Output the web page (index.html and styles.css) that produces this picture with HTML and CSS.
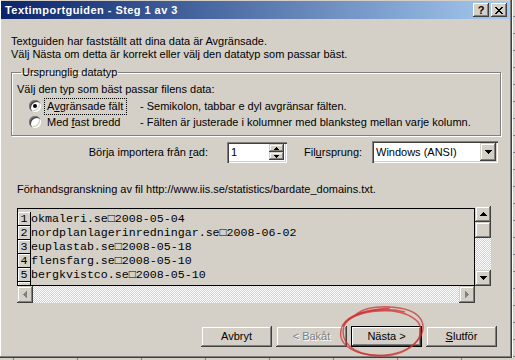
FILE: index.html
```html
<!DOCTYPE html>
<html lang="sv">
  <head>
    <meta charset="UTF-8" />
    <title>Textimportguiden - Steg 1 av 3</title>
    <link rel="stylesheet" href="styles.css">
  </head>
  <body>
    <div class="screen">
      <div class="dialog">
        <div class="titlebar">
          <span class="title">Textimportguiden - Steg 1 av 3</span>
          <span class="caption-btns">
            <span class="cap-btn">?</span>
            <span class="cap-btn">
              <svg width="8" height="7" viewBox="0 0 8 7"><path d="M0 0h2v1h-2z M6 0h2v1h-2z M1 1h2v1h-2z M5 1h2v1h-2z M2 2h4v1h-4z M3 3h2v1h-2z M2 4h4v1h-4z M1 5h2v1h-2z M5 5h2v1h-2z M0 6h2v1h-2z M6 6h2v1h-2z" /></svg>
            </span>
          </span>
        </div>

        <div class="content">
          <p class="intro">
            Textguiden har fastställt att dina data är Avgränsade.<br>
            Välj Nästa om detta är korrekt eller välj den datatyp som passar bäst.
          </p>

          <fieldset class="group">
            <legend>Ursprunglig datatyp</legend>
            <p class="group-hint">Välj den typ som bäst passar filens data:</p>
            <div class="option">
              <span class="radio checked"></span>
              <span class="option-label focused">A<u>v</u>gränsade fält</span>
              <span class="option-desc">- Semikolon, tabbar e dyl avgränsar fälten.</span>
            </div>
            <div class="option">
              <span class="radio"></span>
              <span class="option-label">Med <u>f</u>ast bredd</span>
              <span class="option-desc">- Fälten är justerade i kolumner med blanksteg mellan varje kolumn.</span>
            </div>
          </fieldset>

          <div class="import-row">
            <span class="start-label">Börja importera från <u>r</u>ad:</span>
            <span class="field spin">
              <span class="field-text">1</span>
              <span class="spin-btns">
                <span class="btn3d spin-btn"><svg width="5" height="3" viewBox="0 0 5 3"><path d="M2 0h1v1h-1z M1 1h3v1h-3z M0 2h5v1h-5z" /></svg></span>
                <span class="btn3d spin-btn"><svg width="5" height="3" viewBox="0 0 5 3"><path d="M0 0h5v1h-5z M1 1h3v1h-3z M2 2h1v1h-1z" /></svg></span>
              </span>
            </span>
            <span class="origin-label">Fil<u>u</u>rsprung:</span>
            <span class="field combo">
              <span class="field-text">Windows (ANSI)</span>
              <span class="btn3d combo-btn"><svg width="7" height="4" viewBox="0 0 7 4"><path d="M0 0h7v1h-7z M1 1h5v1h-5z M2 2h3v1h-3z M3 3h1v1h-1z" /></svg></span>
            </span>
          </div>

          <p class="preview-label">Förhandsgranskning av fil http://www.iis.se/statistics/bardate_domains.txt.</p>

          <div class="preview">
            <div class="preview-box">
              <div class="line"><span class="num">1</span><span class="txt">okmaleri.se□2008-05-04</span></div>
              <div class="line"><span class="num">2</span><span class="txt">nordplanlagerinredningar.se□2008-06-02</span></div>
              <div class="line"><span class="num">3</span><span class="txt">euplastab.se□2008-05-18</span></div>
              <div class="line"><span class="num">4</span><span class="txt">flensfarg.se□2008-05-10</span></div>
              <div class="line"><span class="num">5</span><span class="txt">bergkvistco.se□2008-05-10</span></div>
              <div class="line"><span class="num"></span><span class="txt"></span></div>
            </div>
            <div class="vscroll">
              <span class="btn3d sb-btn"><svg width="7" height="4" viewBox="0 0 7 4"><path d="M3 0h1v1h-1z M2 1h3v1h-3z M1 2h5v1h-5z M0 3h7v1h-7z" /></svg></span>
              <span class="btn3d sb-btn"></span>
              <span class="track"></span>
              <span class="btn3d sb-btn"><svg width="7" height="4" viewBox="0 0 7 4"><path d="M0 0h7v1h-7z M1 1h5v1h-5z M2 2h3v1h-3z M3 3h1v1h-1z" /></svg></span>
            </div>
            <div class="hscroll">
              <span class="btn3d sb-btn disabled"><svg width="4" height="7" viewBox="0 0 4 7"><path d="M3 0h1v7h-1z M2 1h1v5h-1z M1 2h1v3h-1z M0 3h1v1h-1z" /></svg></span>
              <span class="track"></span>
              <span class="btn3d sb-btn disabled"><svg width="4" height="7" viewBox="0 0 4 7"><path d="M0 0h1v7h-1z M1 1h1v5h-1z M2 2h1v3h-1z M3 3h1v1h-1z" /></svg></span>
            </div>
          </div>

          <div class="buttons">
            <span class="btn3d button">Avbryt</span>
            <span class="btn3d button disabled">&lt; Bakåt</span>
            <span class="btn3d button default">Nästa &gt;</span>
            <span class="btn3d button"><u>S</u>lutför</span>
          </div>
        </div>
      </div>
      <div class="rowheads"></div>
      <div class="colheads"></div>
      <div class="corner"></div>

      <!-- hand-drawn marker ring round the Next button -->
      <svg class="scribble" width="515" height="360" viewBox="0 0 515 360">
        <path d="M356 314 C372 303 410 305 420 318 C430 332 415 352 385 355 C355 357 338 345 341 330 C343 318 360 310 390 308" />
        <path d="M349 320 C365 306 405 308 418 322 C428 336 410 356 380 356 C350 355 340 340 344 326 C348 316 368 309 395 311" />
        <path d="M343 326 C350 312 380 306 405 312" />
      </svg>
    </div>
  </body>
</html>
```

FILE: styles.css
```css
* {
  box-sizing: border-box;
}
html,
body {
  margin: 0;
}
body {
  width: 515px;
  height: 360px;
  overflow: hidden;
  background: #d4d0c8;
  font-family: "Liberation Sans", Arial, sans-serif;
  font-size: 11px;
  line-height: 13px;
  color: #000;
}
p {
  margin: 0;
}
u {
  text-decoration-thickness: 1px;
  text-underline-offset: 1px;
}
.screen {
  position: relative;
  display: grid;
  grid-template-columns: 512px 3px;
  grid-template-rows: 358px 2px;
}

/* window frame */
.dialog {
  display: flex;
  flex-direction: column;
  padding: 1px 2px 2px 1px;
  background: #d4d0c8;
  box-shadow: inset -1px -1px #404040, inset -2px -2px #808080, inset 1px 0 #fff;
}
.titlebar {
  height: 18px;
  display: flex;
  align-items: center;
  justify-content: space-between;
  padding: 0 3px 0 4px;
  background: linear-gradient(to right, #0a246a, #a6caf0);
}
.title {
  color: #fff;
  font-weight: bold;
  letter-spacing: 0.45px;
}
.caption-btns {
  display: flex;
  gap: 2px;
}
.cap-btn {
  width: 16px;
  height: 14px;
  display: flex;
  align-items: center;
  justify-content: center;
  background: #d4d0c8;
  font-weight: bold;
  font-size: 11px;
  box-shadow: inset -1px -1px #404040, inset 1px 1px #fff, inset -2px -2px #808080;
}

/* shared 3d button look */
.btn3d {
  background: #d4d0c8;
  box-shadow: inset -1px -1px #404040, inset 1px 1px #d4d0c8, inset -2px -2px #808080, inset 2px 2px #fff;
  display: flex;
  align-items: center;
  justify-content: center;
}
svg path {
  fill: #000;
}
.disabled svg path {
  fill: #808080;
}

.content {
  flex: 1;
  padding: 16px 9px 0 10px;
  display: flex;
  flex-direction: column;
}

/* group box */
.group {
  margin: 5px 0 0;
  padding: 5px 5px 5px 5px;
  border: 1px solid #808080;
  box-shadow: 1px 1px #fff, inset 1px 1px #fff;
  min-width: 0;
}
.group legend {
  padding: 0 1px;
  margin-left: 4px;
}
.group-hint {
  margin-top: -1px;
  margin-bottom: 2px;
}
.option {
  height: 16px;
  display: flex;
  align-items: center;
  padding-left: 12px;
}
.radio {
  position: relative;
  width: 12px;
  height: 12px;
  border-radius: 50%;
  background: #fff;
  box-shadow: inset 1px 1px #808080, inset 2px 2px #404040, inset -1px -1px #fff, inset -2px -2px #d4d0c8;
}
.radio.checked::after {
  content: "";
  position: absolute;
  left: 4px;
  top: 4px;
  width: 4px;
  height: 4px;
  border-radius: 50%;
  background: #000;
}
.option-label {
  width: 85px;
  margin-left: 3px;
  padding: 1px 1px 1px 2px;
  border: 1px dotted transparent;
}
.option-label.focused {
  border-color: #000;
  width: 83px;
  margin-right: 2px;
}
.option-desc {
  margin-left: 11px;
}

/* import start row */
.import-row {
  display: flex;
  align-items: center;
  height: 22px;
  margin-top: 5px;
  padding-left: 6px;
}
.start-label {
  width: 191px;
  text-align: right;
}
.field {
  position: relative;
  height: 21px;
  display: flex;
  align-items: center;
  background: #fff;
  box-shadow: inset 1px 1px #808080, inset 2px 2px #404040, inset -1px -1px #fff, inset -2px -2px #d4d0c8;
}
.field-text {
  flex: 1;
  padding-left: 4px;
}
.spin {
  width: 60px;
  margin-left: 19px;
}
.spin-btns {
  display: flex;
  flex-direction: column;
  margin-right: 3px;
}
.spin-btn {
  width: 15px;
  height: 8px;
}
.origin-label {
  margin-left: 17px;
  width: 57px;
}
.combo {
  width: 126px;
  height: 22px;
  margin-left: 11px;
}
.combo-btn {
  width: 16px;
  height: 18px;
  margin-right: 2px;
}

.preview-label {
  margin-top: 20px;
  padding-left: 6px;
}

/* preview grid with scrollbars */
.preview {
  display: grid;
  grid-template-columns: 458px 16px;
  grid-template-rows: 80px 17px;
  margin: 10px 0 0 6px;
}
.preview-box {
  margin-top: 2px;
  border: 1px solid #000;
  overflow: hidden;
  padding-top: 3px;
  font-family: "Liberation Mono", "DejaVu Sans Mono", monospace;
  font-size: 11.65px;
  line-height: 14px;
}
.line {
  display: flex;
  height: 14px;
}
.num {
  width: 13px;
  flex: none;
  text-align: center;
  border-right: 1px solid #000;
  border-bottom: 1px solid #000;
  box-shadow: inset 1px 1px #fff;
}
.txt {
  white-space: pre;
}
.track {
  flex: 1;
  background: repeating-conic-gradient(#fff 0 25%, #d4d0c8 0 50%) 0 0 / 2px 2px;
}
.vscroll {
  display: flex;
  flex-direction: column;
}
.vscroll .sb-btn {
  height: 16px;
}
.hscroll {
  display: flex;
}
.hscroll .sb-btn {
  width: 16px;
}

/* wizard buttons */
.buttons {
  display: flex;
  justify-content: flex-end;
  gap: 4px;
  margin: 23px 4px 0 0;
}
.button {
  width: 71px;
  height: 21px;
}
.button.disabled {
  color: #808080;
  text-shadow: 1px 1px #fff;
}
.button.default {
  box-shadow: inset 0 0 0 1px #000, inset -2px -2px #404040, inset 2px 2px #fff, inset -3px -3px #808080;
}

/* excel window peeking out behind the dialog */
.rowheads {
  background: #d4d0c8 repeating-linear-gradient(to bottom, transparent 0 16px, #808080 16px 17px);
  border-left: 1px solid #fff;
}
.colheads {
  background: repeating-linear-gradient(to right, transparent 0 13px, #808080 13px 14px, transparent 14px 64px);
}
.corner {
  background: #d4d0c8;
}

.scribble {
  position: absolute;
  left: 0;
  top: 0;
  pointer-events: none;
}
.scribble path {
  fill: none;
  stroke: #cc3333;
  stroke-opacity: 0.75;
  stroke-width: 1.5;
}
```
